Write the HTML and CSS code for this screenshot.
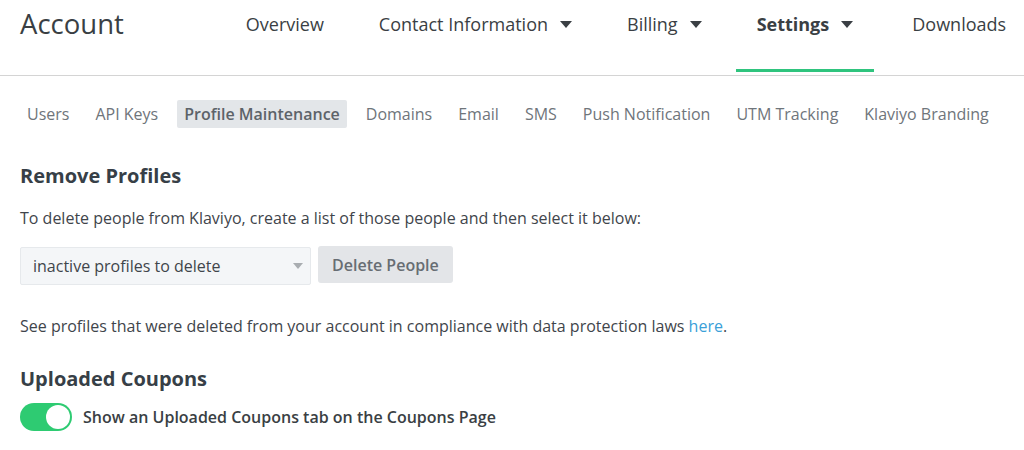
FILE: index.html
```html
<!DOCTYPE html>
<html lang="en">
  <head>
    <meta charset="UTF-8" />
    <meta name="viewport" content="width=device-width, initial-scale=1.0" />
    <title>Account Settings</title>
    <link rel="stylesheet" href="styles.css">
  </head>
  <body>
    <header class="topbar">
      <h1 class="title">Account</h1>
      <nav class="mainnav">
        <a class="nav-item">Overview</a>
        <a class="nav-item">Contact Information <span class="caret"></span></a>
        <a class="nav-item">Billing <span class="caret"></span></a>
        <a class="nav-item active">Settings <span class="caret"></span></a>
        <a class="nav-item last">Downloads</a>
      </nav>
    </header>

    <nav class="subnav">
      <a class="sub-item">Users</a>
      <a class="sub-item">API Keys</a>
      <a class="sub-item active">Profile Maintenance</a>
      <a class="sub-item">Domains</a>
      <a class="sub-item">Email</a>
      <a class="sub-item">SMS</a>
      <a class="sub-item">Push Notification</a>
      <a class="sub-item">UTM Tracking</a>
      <a class="sub-item">Klaviyo Branding</a>
    </nav>

    <main class="content">
      <section class="block">
        <h2>Remove Profiles</h2>
        <p class="intro">To delete people from Klaviyo, create a list of those people and then select it below:</p>
        <div class="delete-row">
          <div class="select">
            <span>inactive profiles to delete</span>
            <span class="select-caret"></span>
          </div>
          <button class="btn" type="button">Delete People</button>
        </div>
        <p class="note">See profiles that were deleted from your account in compliance with data protection laws <a class="link">here</a>.</p>
      </section>

      <section class="block">
        <h2 class="coupons-title">Uploaded Coupons</h2>
        <label class="toggle-row">
          <span class="toggle on"><span class="knob"></span></span>
          <span class="toggle-label">Show an Uploaded Coupons tab on the Coupons Page</span>
        </label>
      </section>
    </main>
  </body>
</html>
```

FILE: styles.css
```css
body {
  font-family: "Open Sans", Arial, sans-serif;
  color: #373f47;
  background: #fff;
  margin: 0;
}
a {
  cursor: pointer;
}

/* top header */
.topbar {
  display: flex;
  align-items: flex-start;
  height: 75px;
  border-bottom: 1px solid #d4d4d4;
  padding: 0 0 0 20px;
  overflow: hidden;
}
.title {
  flex-shrink: 0;
  margin: 5px 0 0;
  font-size: 27.5px;
  line-height: 38px;
  font-weight: 400;
  color: #3a3f44;
}
.mainnav {
  display: flex;
  flex-shrink: 0;
  margin-left: 101px;
  gap: 13px;
}
.nav-item {
  display: flex;
  align-items: center;
  flex-shrink: 0;
  white-space: nowrap;
  height: 48px;
  padding: 0 21px 24px;
  font-size: 18px;
  color: #3a3f44;
}
.nav-item.active {
  font-weight: 700;
  border-bottom: 3px solid #2fc47e;
  padding-bottom: 21px;
}
.nav-item.last {
  margin-left: 4px;
}
.caret {
  display: inline-block;
  margin-left: 12px;
  border-left: 6px solid transparent;
  border-right: 6px solid transparent;
  border-top: 7px solid #3a3f44;
}

/* secondary tabs */
.subnav {
  display: flex;
  gap: 12px;
  padding: 24px 20px 0;
}
.sub-item {
  white-space: nowrap;
  padding: 4px 7px;
  font-size: 16px;
  line-height: 20px;
  color: #6f757b;
  border-radius: 2px;
}
.sub-item.active {
  background: #e3e6e9;
  color: #5d6369;
  font-weight: 600;
}

/* page body */
.content {
  padding: 0 20px;
}
h2 {
  margin: 34px 0 0;
  font-size: 20px;
  line-height: 27px;
  font-weight: 700;
  color: #373f47;
}
p {
  margin: 0;
  font-size: 16px;
  line-height: 22px;
  color: #3f454b;
}
.intro {
  margin-top: 18px;
}
.delete-row {
  display: flex;
  align-items: flex-start;
  gap: 7px;
  margin-top: 18px;
}
.select {
  display: flex;
  align-items: center;
  justify-content: space-between;
  box-sizing: border-box;
  width: 291px;
  height: 38px;
  padding: 0 7px 0 12px;
  background: #f4f6f8;
  border: 1px solid #e6e9ec;
  border-radius: 2px;
  font-size: 16px;
  color: #3f454b;
}
.select-caret {
  border-left: 5px solid transparent;
  border-right: 5px solid transparent;
  border-top: 6px solid #a9adb1;
}
.btn {
  height: 37px;
  margin-top: -1px;
  padding: 0 14px;
  background: #e3e5e8;
  border: none;
  border-radius: 3px;
  font-family: inherit;
  font-size: 16px;
  font-weight: 600;
  color: #676d73;
}
.note {
  margin-top: 30px;
}
.link {
  color: #3aa0d8;
}
.coupons-title {
  margin-top: 28px;
}
.toggle-row {
  display: flex;
  align-items: center;
  gap: 11px;
  margin-top: 11px;
}
.toggle {
  display: flex;
  justify-content: flex-end;
  box-sizing: border-box;
  width: 52px;
  height: 28px;
  padding: 2px;
  background: #2ecb72;
  border-radius: 14px;
}
.knob {
  width: 24px;
  height: 24px;
  border-radius: 50%;
  background: #fff;
}
.toggle-label {
  font-size: 16px;
  font-weight: 600;
  color: #3a3f44;
}
```
